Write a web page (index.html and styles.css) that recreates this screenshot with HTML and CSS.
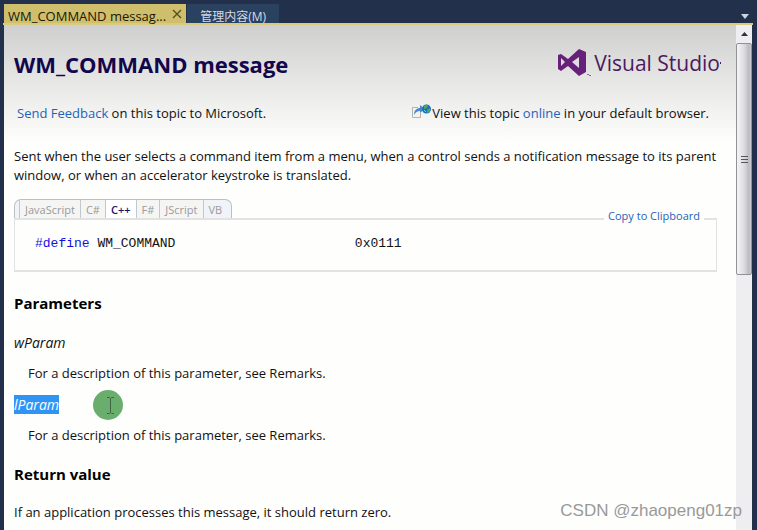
FILE: index.html
```html
<!DOCTYPE html>
<html lang="en">
<head>
  <meta charset="UTF-8" />
  <meta name="viewport" content="width=device-width, initial-scale=1.0"/>
  <title>WM_COMMAND message</title>
  <link rel="stylesheet" href="styles.css">
</head>
<body>

<!-- Window tabs -->
<div class="tab-strip">
  <div class="tab active">
    <span>WM_COMMAND messag...</span>
    <button class="close" aria-label="Close">
      <svg width="10" height="10" viewBox="0 0 10 10"><path d="M1 1L9 9M9 1L1 9" stroke="#5b4f22" stroke-width="1.4"/></svg>
    </button>
  </div>
  <button class="tab">管理内容(M)</button>
  <button class="tab-menu" aria-label="Open tabs">
    <svg width="8" height="5" viewBox="0 0 8 5"><path d="M0 0H8L4 5Z" fill="#ced4dd"/></svg>
  </button>
</div>

<div class="viewer">
  <main class="doc">
    <header class="doc-header">
      <h1>WM_COMMAND message</h1>
      <div class="logo">
        <svg width="33" height="28" viewBox="0 0 33 28">
          <path fill="#68217a" fill-rule="evenodd" d="M21 0L28 3V23L21 27L10 17L3 22L0 20V6L3 5L10 10ZM21 8L14 13L21 19ZM3 9V17L7 13Z"/>
          <path d="M29 25.500H31M31 26.500H33" stroke="#8a6a92"/>
        </svg>
        <span>Visual Studio</span><i class="dot"></i>
      </div>
    </header>

    <div class="feedback">
      <p><a href="#">Send Feedback</a> on this topic to Microsoft.</p>
      <p class="online">
        <svg width="20" height="15" viewBox="0 0 20 15">
          <path d="M6 3.500H.5V13.500H8.500V9" fill="#f4f4ee" stroke="#b4b4aa"/>
          <path d="M2 11C2 6 5 4 8 4V1L13 5L8 9V7C5 7 4 8 2 11Z" fill="#4a86d0"/>
          <circle cx="14.500" cy="5" r="4.500" fill="#1f6fc0"/>
          <path d="M12 2Q14 0 16 1L15 4L12 5ZM15 6L18 4V8L15 9Z" fill="#43b04c"/>
          <path d="M12 6L14 8" stroke="#8cc8f0"/>
        </svg>
        <span>View this topic <a href="#">online</a> in your default browser.</span>
      </p>
    </div>

    <p class="intro">Sent when the user selects a command item from a menu, when a control sends a notification message to its parent window, or when an accelerator keystroke is translated.</p>

    <!-- Code sample -->
    <div class="lang-tabs">
      <button>JavaScript</button>
      <button>C#</button>
      <button class="selected">C++</button>
      <button>F#</button>
      <button>JScript</button>
      <button>VB</button>
    </div>
    <div class="code-box">
      <a class="copy" href="#">Copy to Clipboard</a>
      <pre><span class="keyword">#define</span> WM_COMMAND                       0x0111</pre>
    </div>

    <h2>Parameters</h2>
    <dl>
      <dt>wParam</dt>
      <dd>For a description of this parameter, see Remarks.</dd>
      <dt><mark>lParam</mark>
        <svg class="pointer" width="30" height="30" viewBox="0 0 30 30">
          <circle cx="15" cy="15" r="15" fill="#6aae6d"/>
          <path d="M14 7.500H16.500L17.500 8.500L18.500 7.500H21M17.500 8V23M14 23.500H16.500L17.500 22.500L18.500 23.500H21" fill="none" stroke="#3f6440"/>
        </svg>
      </dt>
      <dd>For a description of this parameter, see Remarks.</dd>
    </dl>

    <h2>Return value</h2>
    <p class="result">If an application processes this message, it should return zero.</p>
  </main>

  <div class="scrollbar">
    <button class="scroll-up" aria-label="Scroll up">
      <svg width="7" height="4" viewBox="0 0 7 4"><path d="M0 4L3.500 0L7 4Z" fill="#333"/></svg>
    </button>
    <div class="thumb"><i></i><i></i><i></i></div>
  </div>
</div>

<div class="watermark">CSDN @zhaopeng01zp</div>

</body>
</html>
```
FILE: styles.css
```css
* {
  box-sizing: border-box;
}

body {
  margin: 0;
  height: 100vh;
  display: flex;
  flex-direction: column;
  overflow: hidden;
  position: relative;
  background: #22304c;
  font-family: "Open Sans", "Noto Sans", "Noto Sans CJK SC", sans-serif;
  font-size: 13px;
  line-height: 19px;
  color: #111;
}

h1, h2, p, dl, dd, pre {
  margin: 0;
}

button {
  border: none;
  padding: 0;
  background: none;
  font: inherit;
  color: inherit;
  cursor: pointer;
}

a {
  color: #1f62b8;
  text-decoration: none;
}

svg {
  display: block;
}

/* Window tabs */
.tab-strip {
  display: flex;
  padding: 4px 4px 0;
  border-bottom: 2px solid #d8cb80;
  border-image: linear-gradient(to right, transparent 4px, #d8cb80 4px, #d8cb80 calc(100% - 5px), transparent calc(100% - 5px)) 1;
}

.tab {
  display: flex;
  align-items: center;
  height: 19px;
  padding: 5px 13px 0;
  background: #2b4160;
  color: #d5dbe3;
  font-size: 12px;
}

.tab.active {
  gap: 6px;
  padding: 5px 4px 0;
  margin-right: 1px;
  background: #cfbe6b;
  color: #1a1708;
  font-size: 13px;
}

.close {
  margin-top: -4px;
}

.tab-menu {
  margin: 5px 4px 0 auto;
}

.viewer {
  flex: 1;
  min-height: 0;
  display: flex;
  margin: 0 5px 0 4px;
}

.doc {
  flex: 1;
  min-width: 0;
  overflow: hidden;
  padding: 24px 10px 0;
  background: #fefefd linear-gradient(#cfcfcf, #e8e8e7 60px, #fefefd 118px) no-repeat;
}

.doc-header {
  display: flex;
  justify-content: space-between;
  padding-right: 5px;
}

h1 {
  font-size: 22px;
  line-height: 30px;
  color: #13074c;
}

.logo {
  display: flex;
  align-items: center;
  gap: 3px;
  height: 28px;
  font-size: 21px;
  color: #4b1a5e;
}

.dot {
  width: 1px;
  height: 2px;
  margin-left: -3px;
  background: #4b1a5e;
}

.feedback {
  display: flex;
  justify-content: space-between;
  margin-top: 25px;
  padding: 0 17px 0 3px;
}

.online {
  display: flex;
}

.intro {
  margin-top: 24px;
}

/* Code sample */
.lang-tabs {
  display: flex;
  width: fit-content;
  height: 19px;
  margin-top: 14px;
  padding: 0 4px;
  border: 1px solid #b9c0c8;
  border-bottom: none;
  border-radius: 7px 7px 0 0;
  background: #f0f3f7;
  color: #9a9a9a;
  font-size: 11px;
  line-height: 17px;
}

.lang-tabs button {
  padding: 0 5px;
  border-left: 1px solid #c3c8cd;
  background: #f5f5f4;
}

.lang-tabs button:last-child {
  background: none;
}

.lang-tabs .selected {
  background: #fff;
  color: #15156a;
  font-weight: 600;
}

.code-box {
  position: relative;
  margin-right: 9px;
  padding: 14px 20px 17px;
  border: 1px solid #e2e2e2;
  border-width: 2px 1px;
}

.copy {
  position: absolute;
  top: -14px;
  right: 12px;
  padding: 0 4px;
  background: #fefefd;
  font-size: 11px;
}

pre {
  font-family: "Liberation Mono", monospace;
  font-size: 13px;
}

.keyword {
  color: #1010e0;
}

h2 {
  margin: 20px 0 19px;
  font-size: 15px;
  line-height: 22px;
  color: #000;
}

dt {
  display: flex;
  align-items: center;
  gap: 34px;
  height: 19px;
  font-size: 14px;
  font-style: italic;
}

dd {
  margin: 12px 0 12px 14px;
}

dl dd:last-child {
  margin-bottom: 0;
}

dl + h2 {
  margin: 18px 0;
}

mark {
  background: #3094f5;
  color: #fff;
}

/* Scrollbar */
.scrollbar {
  width: 16px;
  display: flex;
  flex-direction: column;
  background: #eeedf0;
}

.scroll-up {
  display: flex;
  align-items: center;
  justify-content: center;
  height: 18px;
}

.thumb {
  display: flex;
  flex-direction: column;
  align-items: center;
  justify-content: center;
  gap: 2px;
  height: 46%;
  border: 1px solid #919196;
  border-radius: 2px;
  background: linear-gradient(to right, #f5f5f6, #dddde1 50%, #b9b9c0 85%, #d0d0d5);
}

.thumb i {
  width: 7px;
  height: 1px;
  background: #55555c;
}

.watermark {
  position: absolute;
  right: 15px;
  bottom: 7px;
  font-family: "Liberation Sans", sans-serif;
  font-size: 17px;
  line-height: 24px;
  color: #999;
}
```
